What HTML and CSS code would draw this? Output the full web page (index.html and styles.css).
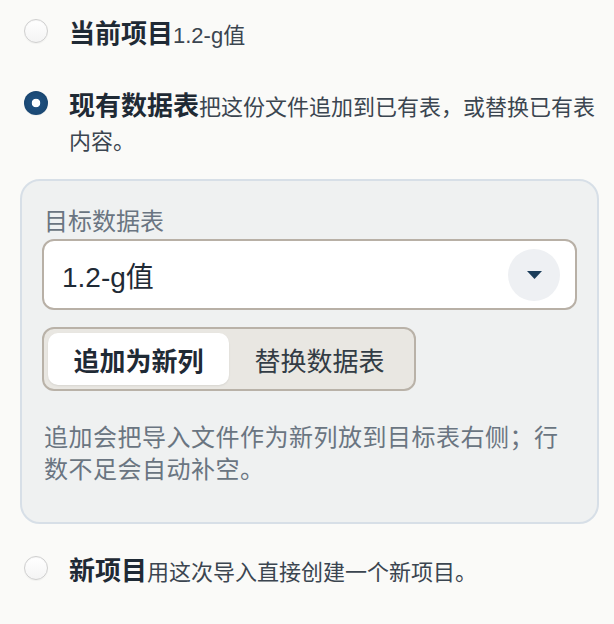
FILE: index.html
```html
<!DOCTYPE html>
<html lang="zh-CN">
<head>
<meta charset="utf-8">
<link rel="stylesheet" href="styles.css">
</head>
<body>
<div class="options">
  <div class="option opt-first">
    <span class="radio"></span>
    <div class="opt-text"><span class="title">当前项目</span><span class="desc">1.2-g值</span></div>
  </div>
  <div class="option opt-second">
    <span class="radio checked"></span>
    <div class="opt-text"><span class="title">现有数据表</span><span class="desc">把这份文件追加到已有表，或替换已有表内容。</span></div>
  </div>
  <div class="panel">
    <div class="label">目标数据表</div>
    <div class="select">
      <span class="select-value">1.2-g值</span>
      <span class="select-btn"><svg width="15" height="8" viewBox="0 0 15 8"><path d="M0 0H15L7.5 8Z" fill="#1b3d5a"/></svg></span>
    </div>
    <div class="segmented">
      <span class="seg active">追加为新列</span>
      <span class="seg">替换数据表</span>
    </div>
    <p class="help">追加会把导入文件作为新列放到目标表右侧；行数不足会自动补空。</p>
  </div>
  <div class="option opt-third">
    <span class="radio"></span>
    <div class="opt-text"><span class="title">新项目</span><span class="desc">用这次导入直接创建一个新项目。</span></div>
  </div>
</div>
</body>
</html>
```

FILE: styles.css
```css
html, body {
  margin: 0;
  padding: 0;
  background: #fafaf8;
}
body {
  font-family: "Liberation Sans", "Noto Sans CJK SC", sans-serif;
  color: #1f2b37;
}
.options {
  padding: 17px 14px 0 24px;
}
.option {
  display: flex;
  align-items: flex-start;
  gap: 21px;
}
.opt-second {
  margin-top: 38px;
}
.opt-third {
  margin-top: 30px;
}
.radio {
  flex: none;
  width: 24px;
  height: 24px;
  margin-top: 2px;
  box-sizing: border-box;
  border-radius: 50%;
  border: 1px solid #cfcfcf;
  background: linear-gradient(#ffffff, #f4f4f4);
  box-shadow: inset 0 1px 1px rgba(0,0,0,0.04), 0 1px 1px rgba(0,0,0,0.04);
}
.radio.checked {
  border: none;
  background: radial-gradient(circle at 50% 50%, #ffffff 0 4px, #1e4f7e 4.6px, #17426b 100%);
}
.opt-text {
  font-size: 26px;
  line-height: 34px;
}
.title {
  font-size: 26px;
  line-height: 34px;
  font-weight: 700;
  color: #1f2a35;
}
.desc {
  font-size: 22px;
  line-height: 22px;
  color: #3b4550;
}
.panel {
  margin: 22px 1px 0 -4px;
  border: 2px solid #d7dfe7;
  border-radius: 20px;
  background: #eff1f1;
  padding: 27px 20px 36px 20px;
}
.label {
  font-size: 24px;
  line-height: 28px;
  color: #6a7581;
  padding-left: 2px;
}
.select {
  margin-top: 3px;
  height: 71px;
  box-sizing: border-box;
  border: 2px solid #b8b0a6;
  border-radius: 12px;
  background: #ffffff;
  display: flex;
  align-items: center;
  justify-content: space-between;
  padding: 0 15px 0 18px;
}
.select-value {
  font-size: 28px;
  color: #1f2a35;
}
.select-btn {
  width: 52px;
  height: 52px;
  border-radius: 50%;
  background: #eef0f3;
  display: flex;
  align-items: center;
  justify-content: center;
}
.select-btn svg {
  display: block;
  margin-top: 1px;
}
.segmented {
  margin-top: 17px;
  display: inline-flex;
  box-sizing: border-box;
  height: 64px;
  padding: 4px;
  border: 2px solid #b9b2a8;
  border-radius: 12px;
  background: #e9e7e2;
}
.seg {
  display: flex;
  align-items: center;
  justify-content: center;
  width: 181px;
  font-size: 26px;
  color: #333c45;
  border-radius: 10px;
}
.seg.active {
  background: #ffffff;
  font-weight: 700;
  color: #1f2a35;
  box-shadow: 0 1px 2px rgba(0,0,0,0.08);
}
.help {
  margin: 31px 0 0 0;
  font-size: 24px;
  letter-spacing: 0.5px;
  line-height: 32px;
  color: #6a7581;
  padding-left: 2px;
}
```
